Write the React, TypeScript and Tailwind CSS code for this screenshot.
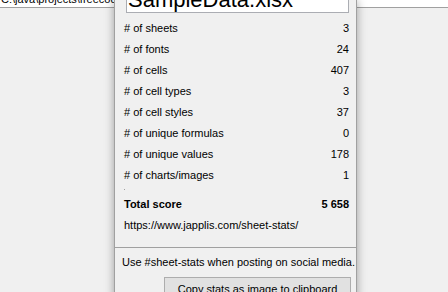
const stats: { label: string; value: string }[] = [
  { label: '# of sheets', value: '3' },
  { label: '# of fonts', value: '24' },
  { label: '# of cells', value: '407' },
  { label: '# of cell types', value: '3' },
  { label: '# of cell styles', value: '37' },
  { label: '# of unique formulas', value: '0' },
  { label: '# of unique values', value: '178' },
  { label: '# of charts/images', value: '1' },
];

const StatRow = ({ label, value, bold }: { label: string; value: string; bold?: boolean }) => (
  <div className={`flex h-[21px] items-center justify-between leading-[14px] ${bold ? 'font-bold' : ''}`}>
    <span>{label}</span>
    <span>{value}</span>
  </div>
);

const App = () => {
  return (
    <div className="relative h-[292px] w-[448px] overflow-hidden bg-[#f0f0f0] font-['Liberation_Sans',Arial,sans-serif] text-[11px] text-black">
      <div className="h-[8px] overflow-hidden border-b border-[#a0a0a0] bg-white">
        <div className="-mt-[8px] pl-[1px] leading-[14px] text-[#000]">C:\java\projects\freecode\SampleData.xlsx</div>
      </div>

      <div className="absolute left-[114px] top-0 flex h-[300px] w-[243px] flex-col border-x border-[#a0a0a0] bg-[#f0f0f0] shadow-[0_0_9px_rgba(0,0,0,0.35)]">
        <div className="pl-[9px] pr-[7px]">
          <div className="-mt-[14px] mb-[4px] ml-[2px] border border-[#abadb3] bg-white pl-[1px] text-[22px] leading-[25px]">
            SampleData.xlsx
          </div>
          {stats.map((s) => (
            <StatRow key={s.label} label={s.label} value={s.value} />
          ))}
          <div className="h-[8px] pt-[4px]">
            <div className="h-px w-px bg-[#a0a0a0]" />
          </div>
          <StatRow label="Total score" value="5 658" bold />
          <div className="flex h-[21px] items-center leading-[14px]">https://www.japplis.com/sheet-stats/</div>
        </div>

        <div className="mt-[12px] border-t border-[#a0a0a0]">
          <div className="mt-[7px] pl-[7px] leading-[14px]">Use #sheet-stats when posting on social media.</div>
          <div className="mt-[8px] flex justify-end pr-[5px]">
            <button
              type="button"
              className="flex h-[23px] w-[187px] items-center justify-center border border-[#adadad] bg-[#e1e1e1] leading-[14px]"
            >
              Copy stats as image to clipboard
            </button>
          </div>
        </div>
      </div>
    </div>
  );
};

export default App;
